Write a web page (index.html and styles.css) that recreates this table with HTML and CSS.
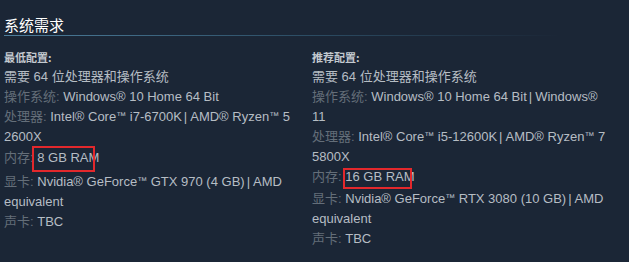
FILE: index.html
```html
<!DOCTYPE html>
<html lang="zh-CN">
<head>
<meta charset="utf-8">
<title>系统需求</title>
<link rel="stylesheet" href="styles.css">
</head>
<body>
<div class="sysreq">
  <h2 class="sysreq-title">系统需求</h2>
  <div class="sysreq-cols">
    <div class="sysreq-col">
      <div class="tier">最低配置:</div>
      <ul class="req-list">
        <li>需要 64 位处理器和操作系统</li>
        <li><span class="lbl">操作系统:</span> Windows® 10 Home 64 Bit</li>
        <li><span class="lbl">处理器:</span> Intel® Core<span class="tm">™</span> i7-6700K<span class="sep">|</span>AMD® Ryzen<span class="tm">™</span> 5 2600X</li>
        <li class="ram ram-min"><span class="lbl">内存:</span> <span class="mark mark-min">8 GB RAM</span></li>
        <li><span class="lbl">显卡:</span> Nvidia® GeForce<span class="tm">™</span> GTX 970 (4 GB)<span class="sep">|</span>AMD equivalent</li>
        <li><span class="lbl">声卡:</span> TBC</li>
      </ul>
    </div>
    <div class="sysreq-col">
      <div class="tier">推荐配置:</div>
      <ul class="req-list">
        <li>需要 64 位处理器和操作系统</li>
        <li><span class="lbl">操作系统:</span> Windows® 10 Home 64 Bit<span class="sep">|</span>Windows® 11</li>
        <li><span class="lbl">处理器:</span> Intel® Core<span class="tm">™</span> i5-12600K<span class="sep">|</span>AMD® Ryzen<span class="tm">™</span> 7 5800X</li>
        <li class="ram ram-rec"><span class="lbl">内存:</span> <span class="mark mark-rec">16 GB RAM</span></li>
        <li><span class="lbl">显卡:</span> Nvidia® GeForce<span class="tm">™</span> RTX 3080 (10 GB)<span class="sep">|</span>AMD equivalent</li>
        <li><span class="lbl">声卡:</span> TBC</li>
      </ul>
    </div>
  </div>
</div>
</body>
</html>
```
FILE: styles.css
```css
html, body {
  margin: 0;
  padding: 0;
  background: #1b2636;
}
body {
  font-family: "Liberation Sans", Arial, "Noto Sans CJK SC", sans-serif;
  font-size: 13px;
  color: #b6bdc4;
}
.sysreq {
  width: 608px;
  padding: 15px 0 0 4px;
}
.sysreq-title {
  margin: 0;
  font-family: "Noto Sans CJK SC", sans-serif;
  font-weight: normal;
  font-size: 15px;
  line-height: 20px;
  color: #ffffff;
  padding-bottom: 1px;
}
.sysreq-title::after {
  content: "";
  display: block;
  width: 592px;
  height: 1px;
  background: linear-gradient(90deg, #4d7e9c 0%, rgba(59, 110, 140, 0.55) 50%, rgba(59, 110, 140, 0) 94%);
}
.sysreq-cols {
  display: grid;
  grid-template-columns: 296px 300px;
  column-gap: 12px;
  padding-top: 10px;
}
.tier {
  font-family: "Noto Sans CJK SC", sans-serif;
  font-size: 11px;
  font-weight: bold;
  line-height: 20px;
  color: #c3c9cf;
}
.req-list {
  list-style: none;
  margin: 0;
  padding: 0;
  line-height: 20px;
}
.req-list li {
  margin: 0;
}
.req-list li.ram-min {
  margin-top: 1px;
  margin-bottom: 4px;
}
.req-list li.ram-rec {
  margin-bottom: 2px;
}
.lbl {
  color: #646e79;
}
.tm {
  font-size: 10px;
  vertical-align: 2px;
  line-height: 1;
}
.sep {
  margin: 0 3px 0 2px;
}
.mark {
  position: relative;
}
.mark::after {
  content: "";
  position: absolute;
  border: 2px solid #e3282c;
  box-sizing: border-box;
  pointer-events: none;
}
.mark-min::after {
  left: -5px;
  width: 63px;
  top: -4px;
  height: 26px;
}
.mark-rec::after {
  left: -2px;
  width: 69px;
  top: -1px;
  height: 21px;
}
```
